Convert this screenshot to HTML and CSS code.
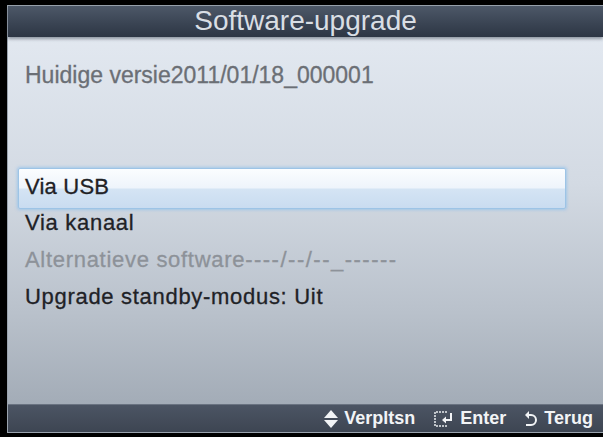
FILE: index.html
```html
<!DOCTYPE html>
<html>
<head>
<meta charset="utf-8">
<link rel="stylesheet" href="styles.css">
</head>
<body>
<div class="screen">
  <div class="header">Software-upgrade</div>
  <div class="content">
    <div class="version">Huidige versie2011/01/18_000001</div>
    <div class="menu">
      <div class="item sel">Via USB</div>
      <div class="item">Via kanaal</div>
      <div class="item dim">Alternatieve software<span class="dashes">----/--/--_------</span></div>
      <div class="item">Upgrade standby-modus: Uit</div>
    </div>
  </div>
  <div class="footer">
    <span class="hint">
      <svg class="ico" width="14" height="20" viewBox="0 0 14 20"><path d="M7 1 L14 9 H0 Z M0 11 H14 L7 19 Z" fill="#f2f4f6"/></svg>
      Verpltsn
    </span>
    <span class="hint">
      <svg class="ico" width="21" height="18" viewBox="0 0 21 18"><path d="M14 2 H2 V16 H14" fill="none" stroke="#e8ebee" stroke-width="1.5" stroke-dasharray="2 1"/><path d="M18 3 V10 H11" fill="none" stroke="#f2f4f6" stroke-width="2"/><path d="M13 6.5 L9 10 L13 13.5 Z" fill="#f2f4f6"/></svg>
      Enter
    </span>
    <span class="hint">
      <svg class="ico" width="14" height="18" viewBox="0 0 14 18"><path d="M4 5 H7 A5 5 0 0 1 7 15 H2" fill="none" stroke="#f2f4f6" stroke-width="2"/><path d="M5 1 L1 5 L5 9 Z" fill="#f2f4f6"/></svg>
      Terug
    </span>
  </div>
</div>
</body>
</html>
```

FILE: styles.css
```css
html, body {
  margin: 0;
  padding: 0;
  background: #000;
  width: 603px;
  height: 437px;
  overflow: hidden;
  font-family: "Liberation Sans", Arial, sans-serif;
}
.screen {
  margin: 5px 0 0 7px;
  width: 596px;
  height: 428px;
  box-sizing: border-box;
  border: 1px solid #9aa3ae;
  border-right: none;
  display: flex;
  flex-direction: column;
}
.header {
  height: 31px;
  flex: none;
  background: linear-gradient(#4d5868, #394352 60%, #2d3644);
  color: #d9dee4;
  font-size: 28px;
  line-height: 30px;
  text-align: center;
  box-shadow: 0 2px 3px rgba(40, 50, 65, 0.45);
  position: relative;
  z-index: 1;
}
.content {
  flex: 1;
  background: linear-gradient(#e2e8f0, #d3dae3 40%, #b9c1cb 75%, #a3acb7);
  padding-top: 20px;
}
.version {
  padding-left: 17px;
  font-size: 23px;
  line-height: 36px;
  color: #6b6f75;
  -webkit-text-stroke: 0.3px #6b6f75;
}
.menu {
  margin-top: 75px;
  padding-left: 10px;
  width: 548px;
}
.item {
  height: 37px;
  line-height: 37px;
  padding-left: 7px;
  font-size: 22px;
  letter-spacing: 0.7px;
  color: #1f2226;
  -webkit-text-stroke: 0.3px currentColor;
  box-sizing: border-box;
  white-space: nowrap;
}
.item.sel {
  height: 41px;
  line-height: 35px;
  margin-bottom: -5px;
  padding-left: 6px;
  letter-spacing: 0.2px;
  border: 1px solid #9dc4e6;
  border-radius: 2px;
  background: linear-gradient(#fbfdff, #eef4fb 48%, #d4e4f4 52%, #c9dcf0);
  box-shadow: 0 0 3px 1px rgba(150, 195, 235, 0.8);
}
.item.dim {
  color: #8d9299;
}
.dashes {
  letter-spacing: 1.5px;
}
.footer {
  height: 27px;
  flex: none;
  background: linear-gradient(#4c5564, #3d4552);
  border-top: 1px solid #6a7381;
  display: flex;
  justify-content: flex-end;
  align-items: center;
  gap: 18px;
  padding-right: 10px;
  color: #f2f4f6;
  font-size: 18px;
  font-weight: bold;
}
.hint {
  display: flex;
  align-items: center;
  gap: 6px;
}
.ico {
  display: block;
}
```
